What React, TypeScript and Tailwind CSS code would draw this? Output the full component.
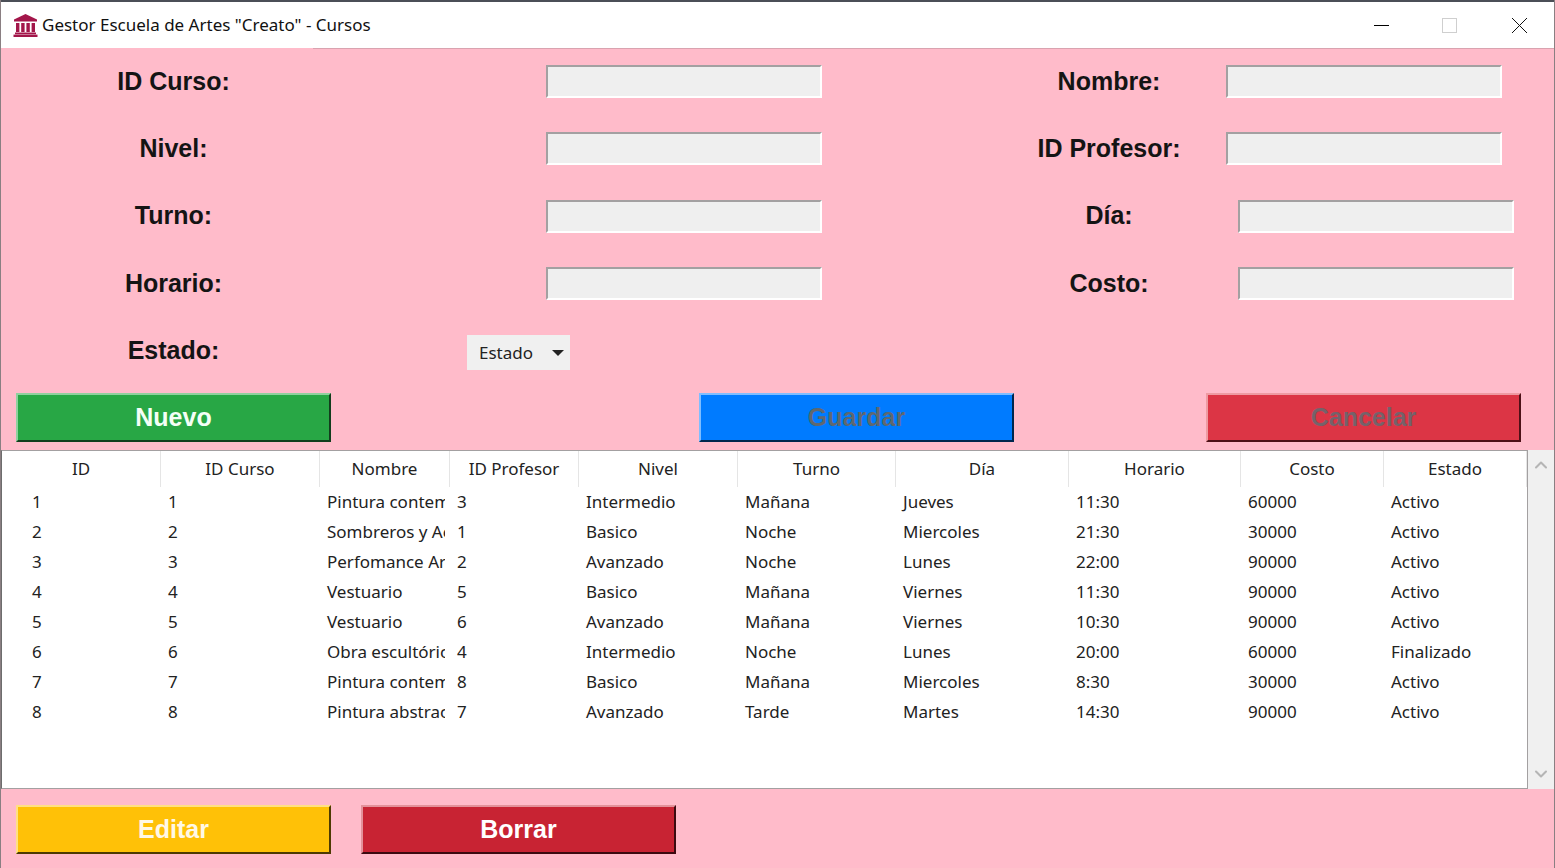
import { ChevronDown, ChevronUp } from "lucide-react";

const cols = "grid grid-cols-[159px_159px_130px_129px_159px_158px_173px_172px_143px_143px]";
const headers = ["ID", "ID Curso", "Nombre", "ID Profesor", "Nivel", "Turno", "Día", "Horario", "Costo", "Estado"];
const rows = [
  ["1", "1", "Pintura contemporánea", "3", "Intermedio", "Mañana", "Jueves", "11:30", "60000", "Activo"],
  ["2", "2", "Sombreros y Accesorios", "1", "Basico", "Noche", "Miercoles", "21:30", "30000", "Activo"],
  ["3", "3", "Perfomance Artística", "2", "Avanzado", "Noche", "Lunes", "22:00", "90000", "Activo"],
  ["4", "4", "Vestuario", "5", "Basico", "Mañana", "Viernes", "11:30", "90000", "Activo"],
  ["5", "5", "Vestuario", "6", "Avanzado", "Mañana", "Viernes", "10:30", "90000", "Activo"],
  ["6", "6", "Obra escultórica", "4", "Intermedio", "Noche", "Lunes", "20:00", "60000", "Finalizado"],
  ["7", "7", "Pintura contemporánea", "8", "Basico", "Mañana", "Miercoles", "8:30", "30000", "Activo"],
  ["8", "8", "Pintura abstracta", "7", "Avanzado", "Tarde", "Martes", "14:30", "90000", "Activo"],
];

function Label({ children }: { children: string }) {
  return (
    <div className="flex items-center justify-center font-['Liberation_Sans',sans-serif] text-[25px] font-bold text-[#141414]">
      {children}
    </div>
  );
}

function Field({ className }: { className: string }) {
  return (
    <div
      className={`h-[33px] w-[276px] border-2 border-t-[#a3a0a1] border-l-[#a3a0a1] border-b-white border-r-white bg-[#efefef] ${className}`}
    />
  );
}

function Btn({ label, className }: { label: string; className: string }) {
  return (
    <button
      className={`flex h-[49px] w-[315px] items-center justify-center border-2 font-['Liberation_Sans',sans-serif] text-[25px] font-bold ${className}`}
    >
      {label}
    </button>
  );
}

export default function App() {
  return (
    <div className="flex h-[868px] w-[1555px] flex-col overflow-hidden border-x border-x-[#8a7f82] bg-[#ffbbca]">
      <header className="flex h-[48px] shrink-0 items-center border-t-2 border-t-[#4b4f57] bg-white font-['Noto_Sans',sans-serif] text-[17px] text-[#111]">
        <svg viewBox="0 0 25 23" className="ml-[12px] mr-[4px] h-[23px] w-[25px]" fill="#a3164a">
          <path d="M12.5 0 24 5.5V7.5H1V5.5Z" />
          <rect x="3" y="9" width="3.4" height="9" />
          <rect x="8.2" y="9" width="3.4" height="9" />
          <rect x="13.4" y="9" width="3.4" height="9" />
          <rect x="18.6" y="9" width="3.4" height="9" />
          <rect x="2" y="18.5" width="21" height="1.8" />
          <rect x="0.5" y="20.6" width="24" height="2.4" />
        </svg>
        <span>Gestor Escuela de Artes "Creato" - Cursos</span>
        <div className="ml-auto flex items-center">
          <div className="mr-[53px] h-px w-[15px] bg-black" />
          <div className="mr-[55px] h-[15px] w-[15px] border border-[#cfcfcf]" />
          <svg viewBox="0 0 15 15" className="mr-[27px] h-[15px] w-[15px]" stroke="#111" strokeWidth="1" fill="none">
            <path d="M0 0 15 15M15 0 0 15" />
          </svg>
        </div>
      </header>
      <div className="flex h-px shrink-0">
        <div className="w-[312px]" />
        <div className="flex-1 bg-[#d9a3af]" />
      </div>

      <form className="grid h-[344px] shrink-0 grid-cols-[345px_676px_174px_1fr] auto-rows-[33px] gap-y-[34.25px] pt-4">
        <Label>ID Curso:</Label>
        <div className="flex justify-center"><Field className="" /></div>
        <Label>Nombre:</Label>
        <Field className="ml-[30px]" />

        <Label>Nivel:</Label>
        <div className="flex justify-center"><Field className="" /></div>
        <Label>ID Profesor:</Label>
        <Field className="ml-[30px]" />

        <Label>Turno:</Label>
        <div className="flex justify-center"><Field className="" /></div>
        <Label>Día:</Label>
        <Field className="ml-[42px]" />

        <Label>Horario:</Label>
        <div className="flex justify-center"><Field className="" /></div>
        <Label>Costo:</Label>
        <Field className="ml-[42px]" />

        <Label>Estado:</Label>
        <div className="ml-[121px] mt-[1px] flex h-[35px] w-[103px] items-center bg-[#f0f0f0] pl-[12px] font-['Noto_Sans',sans-serif] text-[17px] text-[#222]">
          <span>Estado</span>
          <span className="ml-[19px] h-0 w-0 border-x-[6px] border-t-[6px] border-x-transparent border-t-[#222]" />
        </div>
      </form>

      <div className="flex shrink-0 pl-[15px]">
        <Btn label="Nuevo" className="border-t-[#8fd19e] border-l-[#8fd19e] border-b-[#123d1d] border-r-[#123d1d] bg-[#28a745] text-[#f4fff6]" />
        <Btn label="Guardar" className="ml-[368px] border-t-[#7fbdff] border-l-[#7fbdff] border-b-[#00264d] border-r-[#00264d] bg-[#007bff] text-[#5f6870]" />
        <Btn label="Cancelar" className="ml-[192px] border-t-[#ee9aa2] border-l-[#ee9aa2] border-b-[#4d1017] border-r-[#4d1017] bg-[#dc3545] text-[#75626a]" />
      </div>

      <div className="mt-[8px] flex h-[339px] shrink-0">
        <div className="h-full w-[1527px] border border-t-[#a3a0a1] border-l-[#6d6d6d] border-b-[#a3a0a1] border-r-[#a3a0a1] bg-white font-['Noto_Sans',sans-serif] text-[17px] text-[#222]">
          <div className={`${cols} h-[36px]`}>
            {headers.map((h) => (
              <div key={h} className="flex items-center justify-center border-r border-r-[#e5e5e5]">
                {h}
              </div>
            ))}
          </div>
          {rows.map((r) => (
            <div key={r[0]} className={`${cols} h-[30px]`}>
              {r.map((c, i) => (
                <div
                  key={i}
                  className={`flex items-center overflow-hidden whitespace-nowrap ${i === 0 ? "pl-[30px]" : "pl-[7px]"} ${i === 2 ? "mr-[5px]" : ""}`}
                >
                  {c}
                </div>
              ))}
            </div>
          ))}
        </div>
        <div className="flex flex-1 flex-col items-center justify-between bg-[#f0f0f0] py-[5px] text-[#b5b5b5]">
          <ChevronUp size={20} strokeWidth={2.5} />
          <ChevronDown size={20} strokeWidth={2.5} />
        </div>
      </div>

      <div className="mt-[16px] flex shrink-0 gap-[30px] pl-[15px]">
        <Btn label="Editar" className="border-t-[#ffe083] border-l-[#ffe083] border-b-[#4d3a02] border-r-[#4d3a02] bg-[#ffc107] text-[#fff8e6]" />
        <Btn label="Borrar" className="border-t-[#e3919a] border-l-[#e3919a] border-b-[#3c0a10] border-r-[#3c0a10] bg-[#c82333] text-white" />
      </div>
    </div>
  );
}
